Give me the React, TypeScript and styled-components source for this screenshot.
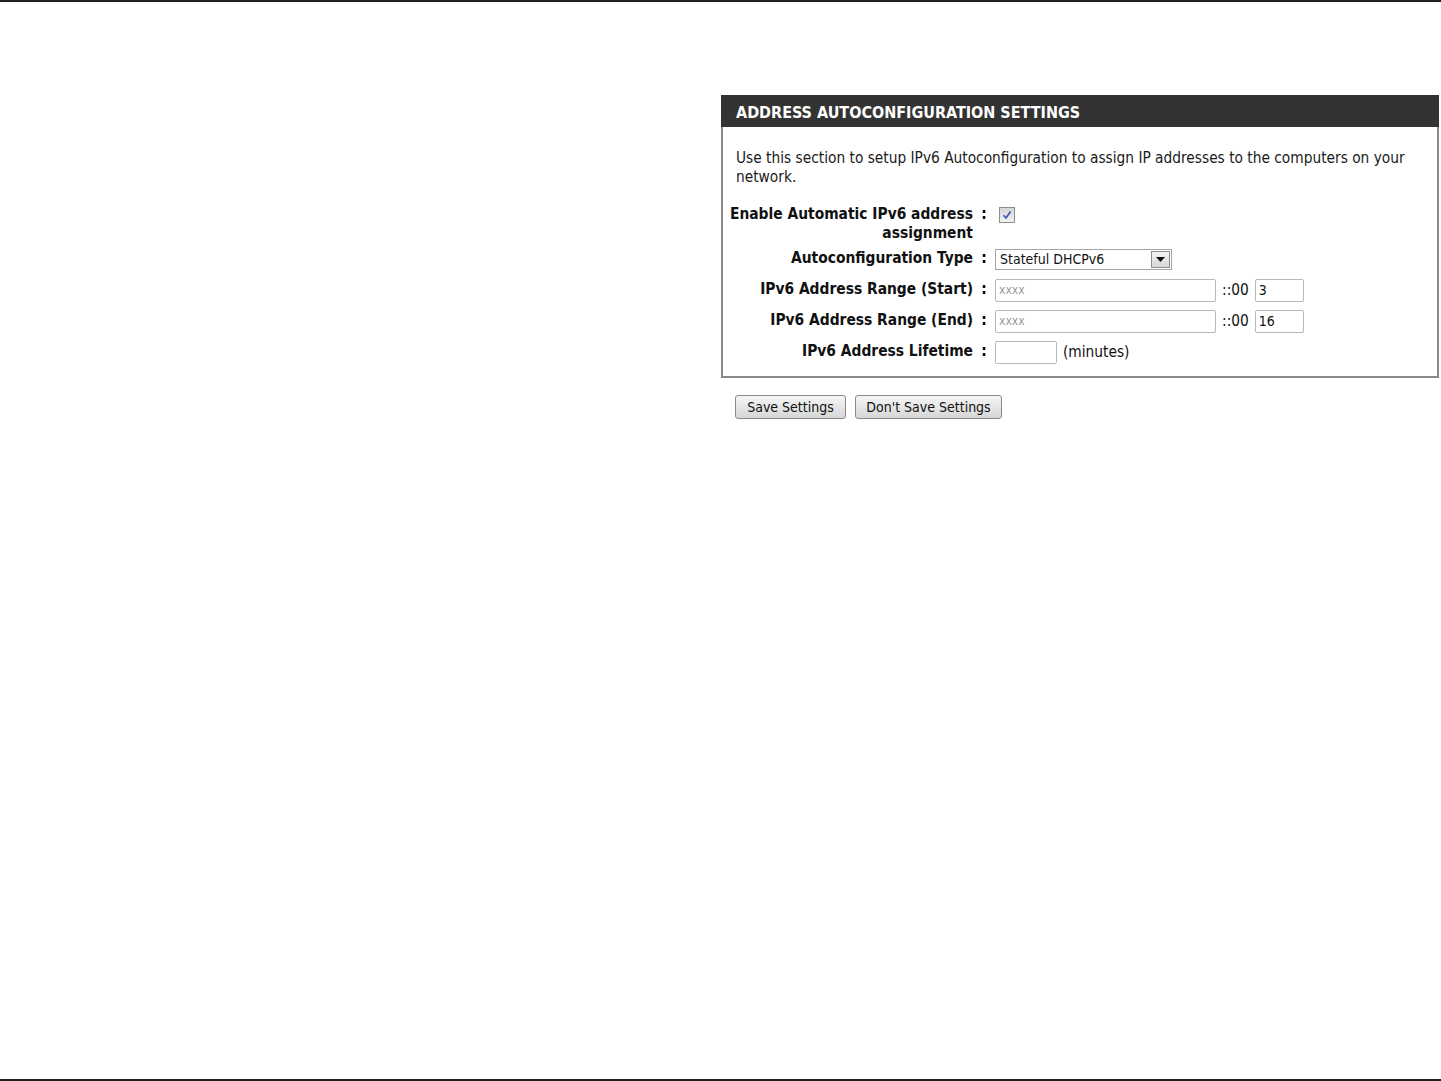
import styled, { createGlobalStyle } from "styled-components";

const GlobalStyle = createGlobalStyle`
    html, body {
        margin: 0;
        padding: 0;
        background: #fff;
    }
    body {
        font-family: "DejaVu Sans Condensed", "DejaVu Sans", "Liberation Sans", sans-serif;
        color: #000;
    }
`;

const Page = styled.div`
    width: 1441px;
    height: 1081px;
    box-sizing: border-box;
    border-top: 2px solid #231f20;
    border-bottom: 2px solid #231f20;
    display: flex;
    flex-direction: column;
    align-items: flex-start;
    padding: 93px 0 0 721px;
`;

const Panel = styled.div`
    width: 718px;
    box-sizing: border-box;
    border: 2px solid #8a8a8a;
    border-top: none;
    background: #fff;
`;

const PanelHeader = styled.div`
    height: 32px;
    box-sizing: border-box;
    background: #333333;
    color: #fff;
    font-weight: bold;
    font-size: 16px;
    display: flex;
    align-items: center;
    padding: 3px 0 0 15px;
    margin: 0 -2px;
`;

const Intro = styled.p`
    margin: 0;
    padding: 22px 14px 0 13px;
    font-size: 15.3px;
    line-height: 19px;
    color: #1a1a1a;
`;

const Form = styled.div`
    display: grid;
    grid-template-columns: 246px 22px 1fr;
    grid-template-rows: 38px repeat(4, 31px);
    align-items: center;
    padding: 18px 0 9px 4px;
`;

const Label = styled.div<{ $top?: boolean }>`
    font-weight: bold;
    font-size: 15.4px;
    line-height: 19px;
    text-align: right;
    color: #111;
    align-self: ${(p) => (p.$top ? "start" : "center")};
`;

const Colon = styled.div<{ $top?: boolean }>`
    font-weight: bold;
    font-size: 15.4px;
    line-height: 19px;
    text-align: center;
    align-self: ${(p) => (p.$top ? "start" : "center")};
`;

const Controls = styled.div<{ $top?: boolean }>`
    display: flex;
    align-items: center;
    gap: 6px;
    font-size: 15.3px;
    align-self: ${(p) => (p.$top ? "start" : "center")};
    margin-top: ${(p) => (p.$top ? "0" : "1px")};
`;

const CheckBox = styled.span`
    display: inline-flex;
    align-items: center;
    justify-content: center;
    width: 16px;
    height: 16px;
    box-sizing: border-box;
    margin: 2px 0 0 4px;
    border: 1px solid #8d8d8d;
    background: linear-gradient(#d6d6d6, #f2f2f2);
`;

const Select = styled.div`
    width: 177px;
    height: 21px;
    box-sizing: border-box;
    border: 1px solid #a5a5a5;
    display: flex;
    align-items: center;
    justify-content: space-between;
    font-size: 14px;
    padding-left: 4px;
    color: #111;
`;

const SelectArrow = styled.span`
    width: 19px;
    height: 17px;
    margin-right: 1px;
    box-sizing: border-box;
    border: 1px solid #8d8d8d;
    background: linear-gradient(#f4f4f4, #d6d6d6);
    display: flex;
    align-items: center;
    justify-content: center;
`;

const TextInput = styled.div<{ $w: number; $muted?: boolean }>`
    width: ${(p) => p.$w}px;
    height: 23px;
    box-sizing: border-box;
    border: 1px solid #b8b8b8;
    border-radius: 2px;
    display: flex;
    align-items: center;
    padding-left: 3px;
    font-size: ${(p) => (p.$muted ? "12px" : "14px")};
    color: ${(p) => (p.$muted ? "#9a9a9a" : "#111")};
`;

const Suffix = styled.span`
    color: #111;
    font-size: 15.3px;
`;

const Buttons = styled.div`
    display: flex;
    gap: 9px;
    padding: 17px 0 0 14px;
`;

const Button = styled.button<{ $w: number }>`
    width: ${(p) => p.$w}px;
    height: 24px;
    box-sizing: border-box;
    border: 1px solid #8a8a8a;
    border-radius: 3px;
    background: linear-gradient(#f6f6f6 0%, #e6e6e6 50%, #d6d6d6 100%);
    font-family: inherit;
    font-size: 14px;
    color: #111;
    padding: 0;
`;

function Check() {
    return (
        <svg width="10" height="10" viewBox="0 0 10 10">
            <path d="M1.5 5.2 L4 8 L8.6 1.5" fill="none" stroke="#3b59a8" strokeWidth="1.6" />
        </svg>
    );
}

function Arrow() {
    return (
        <svg width="9" height="5" viewBox="0 0 9 5">
            <path d="M0 0 H9 L4.5 5 Z" fill="#111" />
        </svg>
    );
}

export default function App() {
    return (
        <>
            <GlobalStyle />
            <Page>
                <Panel>
                    <PanelHeader>ADDRESS AUTOCONFIGURATION SETTINGS</PanelHeader>
                    <Intro>
                        Use this section to setup IPv6 Autoconfiguration to assign IP addresses to the computers on your
                        network.
                    </Intro>
                    <Form>
                        <Label $top>
                            Enable Automatic IPv6 address
                            <br />
                            assignment
                        </Label>
                        <Colon $top>:</Colon>
                        <Controls $top>
                            <CheckBox>
                                <Check />
                            </CheckBox>
                        </Controls>

                        <Label>Autoconfiguration Type</Label>
                        <Colon>:</Colon>
                        <Controls>
                            <Select>
                                Stateful DHCPv6
                                <SelectArrow>
                                    <Arrow />
                                </SelectArrow>
                            </Select>
                        </Controls>

                        <Label>IPv6 Address Range (Start)</Label>
                        <Colon>:</Colon>
                        <Controls>
                            <TextInput $w={221} $muted>
                                xxxx
                            </TextInput>
                            <Suffix>::00</Suffix>
                            <TextInput $w={49}>3</TextInput>
                        </Controls>

                        <Label>IPv6 Address Range (End)</Label>
                        <Colon>:</Colon>
                        <Controls>
                            <TextInput $w={221} $muted>
                                xxxx
                            </TextInput>
                            <Suffix>::00</Suffix>
                            <TextInput $w={49}>16</TextInput>
                        </Controls>

                        <Label>IPv6 Address Lifetime</Label>
                        <Colon>:</Colon>
                        <Controls>
                            <TextInput $w={62} />
                            <Suffix>(minutes)</Suffix>
                        </Controls>
                    </Form>
                </Panel>
                <Buttons>
                    <Button $w={111}>Save Settings</Button>
                    <Button $w={147}>Don't Save Settings</Button>
                </Buttons>
            </Page>
        </>
    );
}
